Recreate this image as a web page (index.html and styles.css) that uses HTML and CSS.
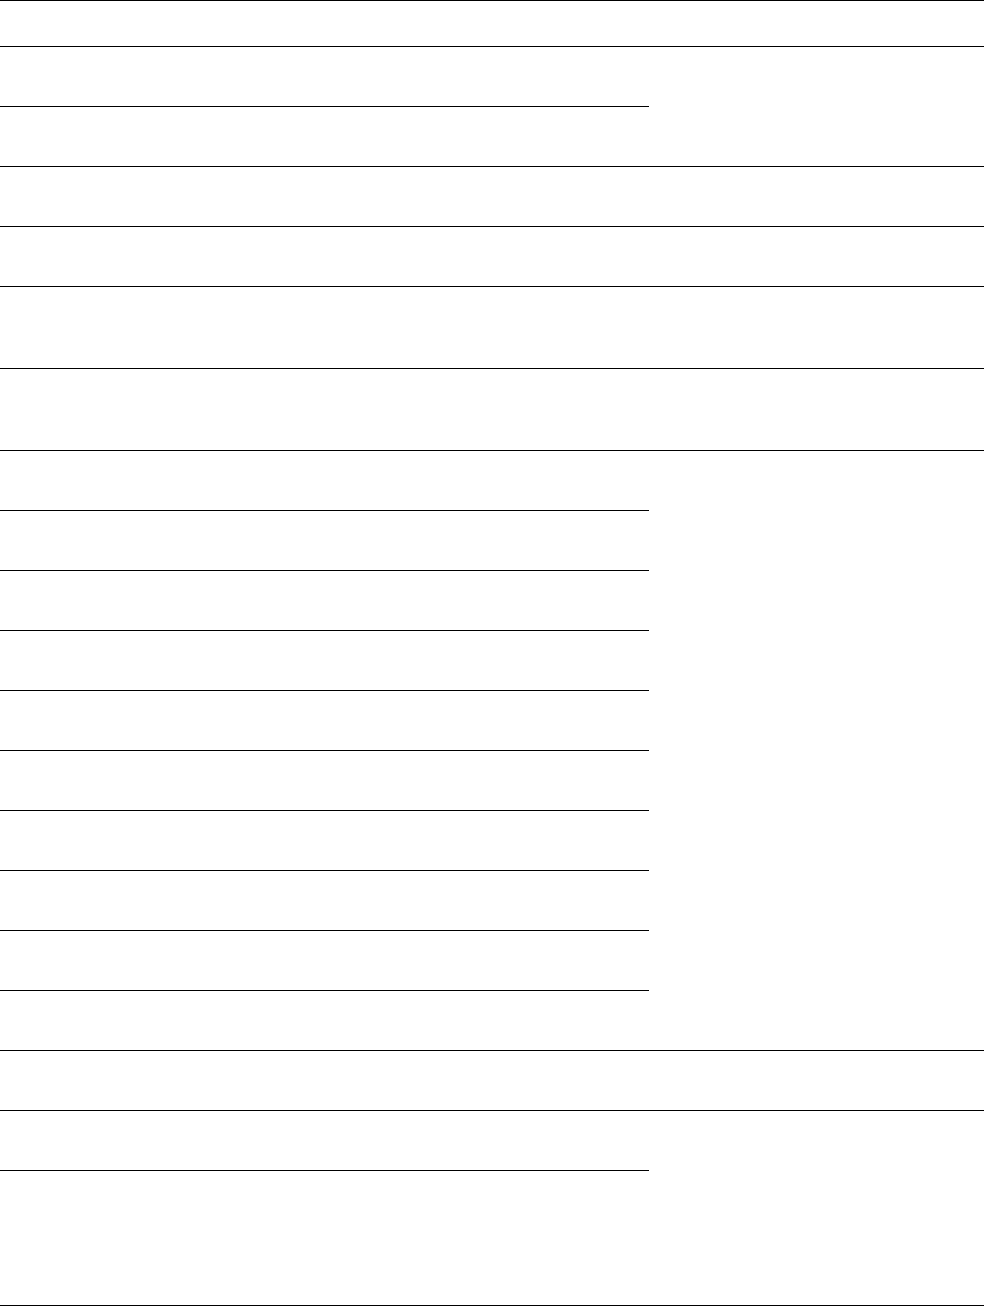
FILE: index.html
```html
<!DOCTYPE html>
<html lang="en">
<head>
<meta charset="utf-8">
<title>Table</title>
<link rel="stylesheet" href="styles.css">
</head>
<body>
<div class="sheet">
  <div class="cell left"></div><div class="cell right"></div>
  <div class="cell left"></div><div class="cell right span2"></div>
  <div class="cell left"></div>
  <div class="cell left"></div><div class="cell right"></div>
  <div class="cell left"></div><div class="cell right"></div>
  <div class="cell left"></div><div class="cell right"></div>
  <div class="cell left"></div><div class="cell right"></div>
  <div class="cell left"></div><div class="cell right span10"></div>
  <div class="cell left"></div>
  <div class="cell left"></div>
  <div class="cell left"></div>
  <div class="cell left"></div>
  <div class="cell left"></div>
  <div class="cell left"></div>
  <div class="cell left"></div>
  <div class="cell left"></div>
  <div class="cell left"></div>
  <div class="cell left"></div><div class="cell right"></div>
  <div class="cell left"></div><div class="cell right span2"></div>
  <div class="cell left"></div>
</div>
</body>
</html>
```
FILE: styles.css
```css
html, body {
  margin: 0;
  padding: 0;
  background: #ffffff;
  font-family: "Liberation Sans", Arial, sans-serif;
}

.sheet {
  width: 984px;
  border-top: 1px solid #000;
  display: grid;
  grid-template-columns: 649px 335px;
  grid-template-rows: 46px repeat(4, 60px) repeat(2, 82px) repeat(12, 60px) 135px;
}

.cell {
  box-sizing: border-box;
  border-bottom: 1px solid #000;
}

.left { grid-column: 1; }
.right { grid-column: 2; }
.span2 { grid-row: span 2; }
.span10 { grid-row: span 10; }
```
